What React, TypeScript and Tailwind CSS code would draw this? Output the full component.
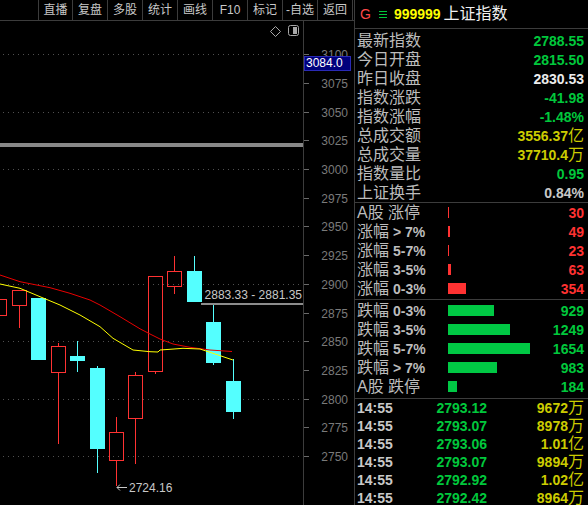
import clsx from "clsx";

const GREEN = "#00c83c";
const BAR_GREEN = "#00c844";
const RED = "#ff3232";
const YELLOW = "#cccc00";
const CYAN = "#54ffff";
const LINE = "#3c3c3c";

const py = (p: number) => 54.3 + (3100 - p) * 1.1477;
const axisTicks = [3100, 3075, 3050, 3025, 3000, 2975, 2950, 2925, 2900, 2875, 2850, 2825, 2800, 2775, 2750];
const gridLines = [3100, 3050, 3000, 2950, 2900, 2850, 2800, 2750];

type Candle = { x: number; top: number; bot: number; hi: number; lo: number; up: boolean };

const candles: Candle[] = [
  { x: -8, top: 299, bot: 316, hi: 299, lo: 316, up: true },
  { x: 12, top: 290, bot: 306, hi: 290, lo: 328, up: true },
  { x: 31, top: 298, bot: 360, hi: 298, lo: 360, up: false },
  { x: 51, top: 346, bot: 373, hi: 343, lo: 444, up: true },
  { x: 70, top: 356, bot: 361, hi: 341, lo: 372, up: false },
  { x: 90, top: 368, bot: 449, hi: 366, lo: 473, up: false },
  { x: 109, top: 432, bot: 461, hi: 417, lo: 486, up: true },
  { x: 128, top: 375, bot: 419, hi: 372, lo: 464, up: true },
  { x: 148, top: 276, bot: 372, hi: 276, lo: 374, up: true },
  { x: 167, top: 271, bot: 287, hi: 256, lo: 294, up: true },
  { x: 187, top: 271, bot: 302, hi: 256, lo: 302, up: false },
  { x: 206, top: 322, bot: 363, hi: 305, lo: 365, up: false },
  { x: 226, top: 381, bot: 412, hi: 359, lo: 419, up: false },
];

const maRed = "0,275 20,281.7 50,287.7 70,293.3 90,300 100,305 120,316.7 140,328.8 150,334 160,339 173,344 190,347.3 210,350 232,351.5";
const maYellow = "0,284 20,288.3 40,296.7 60,305 80,315 100,326.7 113,338.3 133,350 150,351.7 158,352 160,350 170,349.3 183,348.3 200,349 213,353.3 233,360";

const toolbarItems = ["直播", "复盘", "多股", "统计", "画线", "F10", "标记", "-自选", "返回"];

function Toolbar() {
  return (
    <div className="flex h-[21px] border-b border-[#3c3c3c] text-[12px] text-[#c8c8c8]">
      <div className="w-[38px]" />
      {toolbarItems.map((t, i) => (
        <div
          key={t}
          className={clsx(
            "flex items-center justify-center border-l border-[#3c3c3c] leading-none",
            i === 0 ? "w-[34px]" : i === toolbarItems.length - 1 ? "w-[36px] border-r" : "w-[35px]"
          )}
        >
          {t}
        </div>
      ))}
    </div>
  );
}

function Chart() {
  return (
    <svg width={303} height={484} viewBox="0 21 303 484" className="block shrink-0">
      {gridLines.map((p) => (
        <line
          key={p}
          x1={3}
          x2={302}
          y1={Math.round(py(p)) + 0.5}
          y2={Math.round(py(p)) + 0.5}
          stroke="#505050"
          strokeDasharray="1 4"
        />
      ))}
      <rect x={0} y={143} width={303} height={4} fill="#888888" />

      <polygon points="275.5,26.5 280.5,31.5 275.5,36.5 270.5,31.5" fill="none" stroke="#a8a8a8" />
      <rect x={288.5} y={25.5} width={10} height={10} rx={2} fill="none" stroke="#a8a8a8" />
      <rect x={293} y={27} width={4} height={7} fill="#a8a8a8" />

      <g shapeRendering="crispEdges">
        {candles.map((c, i) => {
          const cx = c.x + 7.5;
          if (c.up) {
            return (
              <g key={i} stroke={RED}>
                {c.hi < c.top && <line x1={cx} x2={cx} y1={c.hi} y2={c.top} />}
                {c.lo > c.bot && <line x1={cx} x2={cx} y1={c.bot} y2={c.lo} />}
                <rect x={c.x + 0.5} y={c.top + 0.5} width={14} height={c.bot - c.top - 1} fill="none" />
              </g>
            );
          }
          return (
            <g key={i}>
              <line x1={cx} x2={cx} y1={c.hi} y2={c.lo} stroke={CYAN} />
              <rect x={c.x} y={c.top} width={15} height={c.bot - c.top} fill={CYAN} />
            </g>
          );
        })}
      </g>

      <polyline points={maRed} fill="none" stroke="#e80000" strokeWidth={1} />
      <polyline points={maYellow} fill="none" stroke="#ffff00" strokeWidth={1} />

      <rect x={201} y={303} width={102} height={2} fill="#8c8c8c" />
      <text
        x={302}
        y={294.5}
        textAnchor="end"
        dominantBaseline="central"
        fontSize={12}
        fontFamily="Liberation Sans, sans-serif"
        fill="#c8c8c8"
      >
        2883.33 - 2881.35
      </text>

      <g stroke="#c8c8c8" fill="none">
        <line x1={117} x2={127} y1={487.5} y2={487.5} />
        <polyline points="120,484.5 117,487.5 120,490.5" />
      </g>
      <text
        x={129}
        y={487.5}
        dominantBaseline="central"
        fontSize={12}
        fontFamily="Liberation Sans, sans-serif"
        fill="#c8c8c8"
      >
        2724.16
      </text>
    </svg>
  );
}

function PriceAxis() {
  return (
    <div className="relative w-[51px] shrink-0 border-l border-[#3c3c3c]">
      <svg width={50} height={484} viewBox="304 21 50 484" className="block">
        {axisTicks.map((p) => {
          const y = Math.round(py(p)) + 0.5;
          return (
            <g key={p}>
              <line x1={304} x2={309} y1={y} y2={y} stroke="#6a6a6a" />
              <text
                x={348}
                y={y}
                textAnchor="end"
                dominantBaseline="central"
                fontSize={12}
                fontFamily="Liberation Sans, sans-serif"
                fill="#7a7a7a"
              >
                {p}
              </text>
            </g>
          );
        })}
      </svg>
      <div className="absolute left-0 top-[35px] h-[15px] w-[47px] border border-[#2a2ab4] bg-[#00007c] pl-[1px] text-[12px] leading-[13px] text-white">
        3084.0
      </div>
    </div>
  );
}

const quoteRows: { label: string; value: string; color: string; unit?: string }[] = [
  { label: "最新指数", value: "2788.55", color: GREEN },
  { label: "今日开盘", value: "2815.50", color: GREEN },
  { label: "昨日收盘", value: "2830.53", color: "#ececec" },
  { label: "指数涨跌", value: "-41.98", color: GREEN },
  { label: "指数涨幅", value: "-1.48%", color: GREEN },
  { label: "总成交额", value: "3556.37", color: YELLOW, unit: "亿" },
  { label: "总成交量", value: "37710.4", color: YELLOW, unit: "万" },
  { label: "指数量比", value: "0.95", color: GREEN },
  { label: "上证换手", value: "0.84%", color: "#c8c8c8" },
];

const riseRows = [
  { head: "A股 涨停", tail: "", n: 30 },
  { head: "涨幅", tail: "> 7%", n: 49 },
  { head: "涨幅", tail: "5-7%", n: 23 },
  { head: "涨幅", tail: "3-5%", n: 63 },
  { head: "涨幅", tail: "0-3%", n: 354 },
];

const fallRows = [
  { head: "跌幅", tail: "0-3%", n: 929 },
  { head: "跌幅", tail: "3-5%", n: 1249 },
  { head: "跌幅", tail: "5-7%", n: 1654 },
  { head: "跌幅", tail: "> 7%", n: 983 },
  { head: "A股 跌停", tail: "", n: 184 },
];

const ticksRows = [
  { t: "14:55", p: "2793.12", v: "9672", u: "万" },
  { t: "14:55", p: "2793.07", v: "8978", u: "万" },
  { t: "14:55", p: "2793.06", v: "1.01", u: "亿" },
  { t: "14:55", p: "2793.07", v: "9894", u: "万" },
  { t: "14:55", p: "2792.92", v: "1.02", u: "亿" },
  { t: "14:55", p: "2792.42", v: "8964", u: "万" },
];

function CountRows({ rows, color }: { rows: { head: string; tail: string; n: number }[]; color: string }) {
  return (
    <>
      {rows.map((r, i) => (
        <div key={i} className="flex h-[19px] items-center">
          <div className="flex w-[91px] shrink-0 items-center text-[#bcbcbc]">
            <span className="text-[16px]">{r.head}</span>
            {r.tail && <span className="ml-[4px] text-[14px] font-bold">{r.tail}</span>}
          </div>
          <div className="flex-1">
            <div className="h-[11px]" style={{ width: r.n / 20.1, backgroundColor: color === RED ? RED : BAR_GREEN }} />
          </div>
          <span className="text-[14px] font-bold" style={{ color }}>
            {r.n}
          </span>
        </div>
      ))}
    </>
  );
}

function QuotePanel() {
  return (
    <div className="flex min-w-0 flex-1 flex-col overflow-hidden">
      <div className="flex h-[29px] shrink-0 items-center border-b border-[#3c3c3c] pl-[5px]">
        <span className="text-[14px] text-[#ff4848]">G</span>
        <svg width={8} height={7} className="ml-[8px]">
          <g stroke={GREEN}>
            <line x1={0} x2={8} y1={0.5} y2={0.5} />
            <line x1={0} x2={8} y1={3.5} y2={3.5} />
            <line x1={0} x2={8} y1={6.5} y2={6.5} />
          </g>
        </svg>
        <span className="ml-[7px] text-[14px] font-bold text-[#ffff00]">999999</span>
        <span className="ml-[3px] text-[16px] text-[#f0f0f0]">上证指数</span>
      </div>

      <div className="shrink-0 border-b border-[#3c3c3c] pl-[2px] pr-[4px] pt-[2px]">
        {quoteRows.map((r) => (
          <div key={r.label} className="flex h-[19px] items-center justify-between">
            <span className="text-[16px] text-[#bcbcbc]">{r.label}</span>
            <span className="flex items-center" style={{ color: r.color }}>
              <span className="text-[14px] font-bold">{r.value}</span>
              {r.unit && <span className="text-[16px]">{r.unit}</span>}
            </span>
          </div>
        ))}
      </div>

      <div className="shrink-0 border-b border-[#3c3c3c] pb-[1px] pl-[2px] pr-[4px]">
        <CountRows rows={riseRows} color={RED} />
      </div>

      <div className="shrink-0 border-b border-[#3c3c3c] pb-[2px] pl-[2px] pr-[4px] pt-[1px]">
        <CountRows rows={fallRows} color={GREEN} />
      </div>

      <div className="pl-[2px] pr-[4px]">
        {ticksRows.map((r, i) => (
          <div key={i} className="flex h-[18px] items-center text-[14px] font-bold">
            <span className="w-[60px] shrink-0 text-[#c8c8c8]">{r.t}</span>
            <span className="w-[70px] shrink-0 text-right" style={{ color: GREEN }}>
              {r.p}
            </span>
            <span className="flex flex-1 items-center justify-end" style={{ color: YELLOW }}>
              {r.v}
              <span className="text-[16px] font-normal">{r.u}</span>
            </span>
          </div>
        ))}
      </div>
    </div>
  );
}

export default function App() {
  return (
    <div className="flex h-[505px] w-[588px] overflow-hidden bg-black font-[Liberation_Sans,Noto_Sans_CJK_SC,sans-serif] leading-none">
      <div className="flex w-[355px] shrink-0 flex-col border-r border-[#3c3c3c]">
        <Toolbar />
        <div className="flex h-[484px]">
          <Chart />
          <PriceAxis />
        </div>
      </div>
      <QuotePanel />
    </div>
  );
}
